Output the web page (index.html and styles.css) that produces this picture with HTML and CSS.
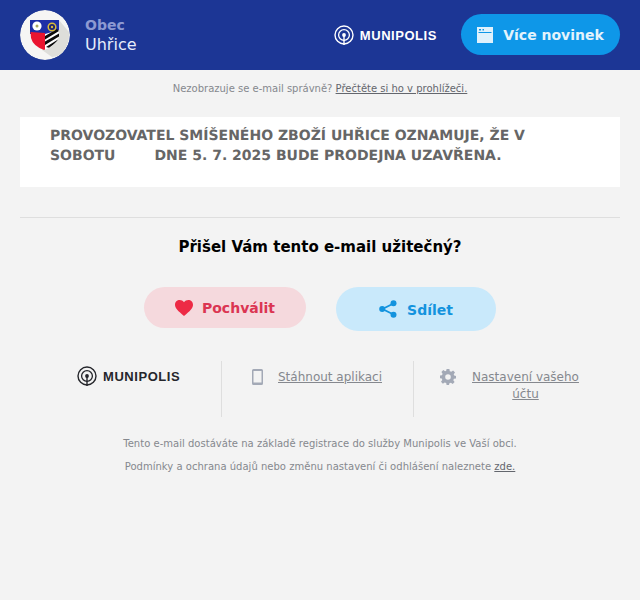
FILE: index.html
```html
<!DOCTYPE html>
<html lang="cs">
<head>
<meta charset="utf-8">
<title>Munipolis</title>
<link rel="stylesheet" href="styles.css">
</head>
<body>
<header class="header">
  <div class="crest">
    <svg class="crest-svg" viewBox="0 0 50 50" width="50" height="50">
      <circle cx="25" cy="25" r="25" fill="#f6f6f4"/>
      <path d="M39 10 L49 22 Q50 38 38 46 L32 47 L22 40 Z" fill="#dedeDA"/>
      <path d="M10 10 H39 V24 Q38 35 24 40 Q11 35 10 24 Z" fill="#fff"/>
      <path d="M10 10 H39 V20 L25 24 L10 24 Z" fill="#1d2ea6"/>
      <path d="M10.500 22 L25 23 V39.500 L24 40 Q13 36 11 28 Z" fill="#ea1530"/>
      <path d="M25 26 L37 19 L39 21 L25 29.500 Z M25 31.500 L39 23.500 V26.500 L25 35 Z M26 37 L38 29.500 Q36 33 29 37.800 Z" fill="#0c0c0c"/>
      <circle cx="17" cy="16" r="4.600" fill="#fff"/>
      <circle cx="17" cy="16" r="1.500" fill="#a8a860"/>
      <circle cx="32" cy="17" r="3.800" fill="#20246e" stroke="#d9bb3c" stroke-width="1.500"/>
      <circle cx="32" cy="17" r="1.200" fill="#d9bb3c"/>
    </svg>
  </div>
  <div class="town">
    <div class="town-label">Obec</div>
    <div class="town-name">Uhřice</div>
  </div>
  <div class="brand brand-light">
    <svg class="signal" viewBox="0 0 20 20" width="20" height="20">
      <circle cx="10" cy="10" r="9" fill="none" stroke="currentColor" stroke-width="1.400"/>
      <circle cx="10" cy="10" r="5.400" fill="none" stroke="currentColor" stroke-width="1.300"/>
      <circle cx="10" cy="10" r="1.900" fill="currentColor"/>
      <path d="M10 10 V20" stroke="currentColor" stroke-width="1.400"/>
    </svg>
    <span class="brand-text">MUNIPOLIS</span>
  </div>
  <a class="news-btn" href="#">
    <svg viewBox="0 0 16 16" width="16" height="16">
      <path d="M0 0 H16 V16 H0 Z" fill="#dff1fc"/>
      <path d="M1.500 5 H14.500 V6 H1.500 Z M2 2 h2 v1.500 h-2 Z M5.500 2 h1.500 v1.500 h-1.500 Z" fill="#0e97e8"/>
    </svg>
    <span>Více novinek</span>
  </a>
</header>

<p class="preview">Nezobrazuje se e-mail správně? <a href="#">Přečtěte si ho v prohlížeči.</a></p>

<section class="notice">
  <p>PROVOZOVATEL SMÍŠENÉHO ZBOŽÍ UHŘICE OZNAMUJE, ŽE V SOBOTU&nbsp; &nbsp; &nbsp; &nbsp; DNE 5. 7. 2025 BUDE PRODEJNA UZAVŘENA.</p>
</section>

<div class="divider"></div>

<h2 class="question">Přišel Vám tento e-mail užitečný?</h2>

<div class="actions">
  <a class="action action-like" href="#">
    <svg viewBox="0 0 18 16" width="18" height="16"><path d="M9 16 C3 11 0 8.400 0 4.800 C0 2 2.100 0 4.700 0 C6.300 0 8 .8 9 2.300 C10 .8 11.700 0 13.300 0 C15.900 0 18 2 18 4.800 C18 8.400 15 11 9 16 Z" fill="#ed2a45"/></svg>
    <span>Pochválit</span>
  </a>
  <a class="action action-share" href="#">
    <svg viewBox="0 0 18 18" width="18" height="18">
      <path d="M14.500 3.500 L3.500 9 L14.500 14.500" fill="none" stroke="#1393de" stroke-width="1.800"/>
      <circle cx="14.500" cy="3.200" r="3" fill="#1393de"/><circle cx="3.200" cy="9" r="3" fill="#1393de"/><circle cx="14.500" cy="14.800" r="3" fill="#1393de"/>
    </svg>
    <span class="share-label">Sdílet</span>
  </a>
</div>

<div class="foot-links">
  <div class="foot-cell foot-brand">
    <div class="brand brand-dark">
      <svg class="signal" viewBox="0 0 20 20" width="20" height="20">
        <circle cx="10" cy="10" r="9" fill="none" stroke="currentColor" stroke-width="1.400"/>
        <circle cx="10" cy="10" r="5.400" fill="none" stroke="currentColor" stroke-width="1.300"/>
        <circle cx="10" cy="10" r="1.900" fill="currentColor"/>
        <path d="M10 10 V20" stroke="currentColor" stroke-width="1.400"/>
      </svg>
      <span class="brand-text">MUNIPOLIS</span>
    </div>
  </div>
  <div class="foot-cell foot-app">
    <svg viewBox="0 0 11 16" width="11" height="16"><path d="M1.500 0 H9.500 Q11 0 11 1.500 V14.500 Q11 16 9.500 16 H1.500 Q0 16 0 14.500 V1.500 Q0 0 1.500 0 Z M1.500 2 V13.500 H9.500 V2 Z" fill="#a3a9b6" fill-rule="evenodd"/></svg>
    <a href="#">Stáhnout aplikaci</a>
  </div>
  <div class="foot-cell foot-settings">
    <svg viewBox="0 0 16 16" width="16" height="16"><path d="M6.600 0 H9.400 L9.800 2.200 L11.300 2.800 L13.100 1.500 L15 3.400 L13.700 5.200 L14.200 6.600 L16 7 V9.400 L13.900 9.800 L13.300 11.300 L14.600 13.100 L12.700 15 L10.900 13.700 L9.400 14.200 L9 16 H6.600 L6.200 14 L4.700 13.400 L2.900 14.700 L1 12.800 L2.300 11 L1.800 9.500 L0 9.200 V6.600 L2 6.200 L2.600 4.700 L1.400 2.900 L3.300 1 L5.100 2.300 L6.200 1.800 Z M8 5.200 A2.800 2.800 0 1 0 8 10.800 A2.800 2.800 0 1 0 8 5.200 Z" fill="#a3a9b6" fill-rule="evenodd"/></svg>
    <a href="#">Nastavení vašeho účtu</a>
  </div>
</div>

<footer class="legal">
  <p>Tento e-mail dostáváte na základě registrace do služby Munipolis ve Vaší obci.</p>
  <p>Podmínky a ochrana údajů nebo změnu nastavení či odhlášení naleznete <a href="#">zde.</a></p>
</footer>
</body>
</html>
```

FILE: styles.css
```css
* { box-sizing: border-box; }
html, body { margin: 0; padding: 0; }
body {
  background: #f3f3f3;
  font-family: "DejaVu Sans", sans-serif;
  color: #000;
  height: 600px;
  overflow: hidden;
}
a { color: inherit; }
p { margin: 0; }

.header {
  height: 70px;
  background: #1c3695;
  display: flex;
  align-items: center;
  padding: 0 20px;
}
.crest { width: 50px; height: 50px; flex: none; }
.crest-svg { display: block; border-radius: 50%; }
.town { margin-left: 15px; flex: 1; }
.town-label { font-size: 14px; font-weight: 700; line-height: 20px; color: #8d9ad2; }
.town-name { font-size: 16px; line-height: 20px; color: #e6ecfa; }

.brand { display: flex; align-items: center; gap: 6px; }
.brand-light { color: #fff; margin-right: 24px; }
.brand-dark { color: #25262b; }
.brand-text {
  font-family: "Liberation Sans", sans-serif;
  font-weight: 700;
  font-size: 13px;
  letter-spacing: .55px;
}
.signal { display: block; }

.news-btn {
  width: 159px;
  height: 41px;
  margin-bottom: 1px;
  border-radius: 21px;
  background: #0e97e8;
  color: #e3f3fc;
  display: flex;
  align-items: center;
  justify-content: center;
  gap: 10px;
  font-size: 14px;
  font-weight: 700;
  text-decoration: none;
}

.preview {
  text-align: center;
  font-size: 10px;
  line-height: 14px;
  color: #85888e;
  padding-top: 12px;
  height: 47px;
}
.preview a { color: #63666d; }

.notice {
  margin: 0 20px;
  height: 70px;
  background: #fff;
  padding: 9px 30px;
}
.notice p {
  font-size: 14px;
  line-height: 20px;
  font-weight: 700;
  color: #666;
  text-rendering: geometricPrecision;
}

.divider { margin: 30px 20px 0; height: 1px; background: #dedede; }

.question {
  margin: 20px 0 0;
  text-align: center;
  font-size: 15px;
  line-height: 18px;
  font-weight: 700;
  color: #000;
}

.actions {
  margin-top: 31px;
  display: flex;
  justify-content: center;
  align-items: flex-start;
  gap: 30px;
}
.action {
  display: flex;
  align-items: center;
  justify-content: center;
  gap: 10px;
  border-radius: 22px;
  font-size: 14px;
  font-weight: 700;
  text-decoration: none;
}
.action-like { width: 162px; height: 41px; gap: 9px; background: #f5d9dd; color: #db3552; }
.action-share { width: 160px; height: 44px; background: #c9e9fb; color: #1393de; }
.share-label { margin-top: 2px; }

.foot-links {
  margin: 30px 20px 0;
  display: flex;
  height: 56px;
}
.foot-cell {
  display: flex;
  align-items: flex-start;
  padding-top: 8px;
  font-size: 12px;
  line-height: 17px;
  color: #85888e;
  text-align: center;
}
.foot-cell + .foot-cell { border-left: 1px solid #dedede; }
.foot-brand { width: 201px; padding-left: 57px; padding-top: 5px; }
.foot-app { width: 192px; padding-left: 30px; gap: 15px; }
.foot-settings { flex: 1; padding-left: 26px; gap: 8px; }
.foot-settings a { width: 123px; }

.legal {
  margin-top: 20px;
  text-align: center;
  font-size: 10px;
  line-height: 14px;
  color: #85888e;
  letter-spacing: .02px;
}
.legal p + p { margin-top: 9px; }
.legal a { color: #63666d; }
```
